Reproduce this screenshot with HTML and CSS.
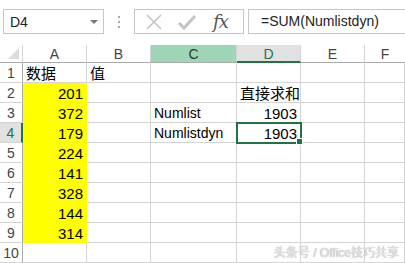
FILE: index.html
```html
<!DOCTYPE html>
<html lang="zh">
<head>
    <meta charset="UTF-8">
    <title>Numlistdyn</title>
    <link rel="stylesheet" href="styles.css">
</head>
<body>

    <div id="formula-bar">
        <div id="name-box">
            <span>D4</span>
            <span class="drop-arrow"></span>
        </div>
        <div class="grip">
            <span></span><span></span><span></span>
        </div>
        <div id="fx-box">
            <svg width="18" height="18" viewBox="0 0 18 18">
                <path d="M2 2 L16 16 M16 2 L2 16" stroke="#c4c4c4" stroke-width="1.6" fill="none"/>
            </svg>
            <svg width="20" height="18" viewBox="0 0 20 18">
                <path d="M2 10 L7 15 L18 3" stroke="#c4c4c4" stroke-width="3" fill="none"/>
            </svg>
            <span class="fx">fx</span>
        </div>
        <div id="formula-input">=SUM(Numlistdyn)</div>
    </div>

    <div id="sheet">
        <div class="corner"><span></span></div>
        <div class="col-head">A</div>
        <div class="col-head">B</div>
        <div class="col-head col-active">C</div>
        <div class="col-head col-current">D</div>
        <div class="col-head">E</div>
        <div class="col-head last">F</div>

        <div class="row-head">1</div>
        <div class="cell">数据</div>
        <div class="cell">值</div>
        <div class="cell"></div>
        <div class="cell"></div>
        <div class="cell"></div>
        <div class="cell"></div>

        <div class="row-head">2</div>
        <div class="cell yellow num">201</div>
        <div class="cell"></div>
        <div class="cell"></div>
        <div class="cell">直接求和</div>
        <div class="cell"></div>
        <div class="cell"></div>

        <div class="row-head">3</div>
        <div class="cell yellow num">372</div>
        <div class="cell"></div>
        <div class="cell label">Numlist</div>
        <div class="cell num">1903</div>
        <div class="cell"></div>
        <div class="cell"></div>

        <div class="row-head row-current">4</div>
        <div class="cell yellow num">179</div>
        <div class="cell"></div>
        <div class="cell label">Numlistdyn</div>
        <div class="cell num selected">1903</div>
        <div class="cell"></div>
        <div class="cell"></div>

        <div class="row-head">5</div>
        <div class="cell yellow num">224</div>
        <div class="cell"></div>
        <div class="cell"></div>
        <div class="cell"></div>
        <div class="cell"></div>
        <div class="cell"></div>

        <div class="row-head">6</div>
        <div class="cell yellow num">141</div>
        <div class="cell"></div>
        <div class="cell"></div>
        <div class="cell"></div>
        <div class="cell"></div>
        <div class="cell"></div>

        <div class="row-head">7</div>
        <div class="cell yellow num">328</div>
        <div class="cell"></div>
        <div class="cell"></div>
        <div class="cell"></div>
        <div class="cell"></div>
        <div class="cell"></div>

        <div class="row-head">8</div>
        <div class="cell yellow num">144</div>
        <div class="cell"></div>
        <div class="cell"></div>
        <div class="cell"></div>
        <div class="cell"></div>
        <div class="cell"></div>

        <div class="row-head">9</div>
        <div class="cell yellow num">314</div>
        <div class="cell"></div>
        <div class="cell"></div>
        <div class="cell"></div>
        <div class="cell"></div>
        <div class="cell"></div>

        <div class="row-head">10</div>
        <div class="cell"></div>
        <div class="cell"></div>
        <div class="cell"></div>
        <div class="cell"></div>
        <div class="cell"></div>
        <div class="cell"></div>
    </div>

    <div id="watermark">头条号 / Office技巧共享</div>

</body>
</html>
```

FILE: styles.css
```css
body {
    margin: 0;
    width: 405px;
    height: 263px;
    overflow: hidden;
    background-color: white;
    font-family: "Liberation Sans", "Noto Sans CJK SC", sans-serif;
    position: relative;
}
#formula-bar {
    display: flex;
    align-items: center;
    height: 25px;
    margin-top: 9px;
    margin-bottom: 11px;
}
#name-box {
    box-sizing: border-box;
    width: 101px;
    height: 25px;
    margin-left: 3px;
    border: 1px solid #c6c6c6;
    display: flex;
    align-items: center;
    justify-content: space-between;
    padding: 0 5px 0 6px;
    font-size: 14px;
    color: #222;
}
.drop-arrow {
    width: 0;
    height: 0;
    border-left: 4px solid transparent;
    border-right: 4px solid transparent;
    border-top: 4px solid #777;
}
.grip {
    width: 30px;
    display: flex;
    flex-direction: column;
    align-items: center;
    gap: 3px;
}
.grip span {
    width: 2px;
    height: 2px;
    background-color: #aaa;
}
#fx-box {
    box-sizing: border-box;
    width: 110px;
    height: 25px;
    border: 1px solid #c6c6c6;
    display: flex;
    align-items: center;
    gap: 14px;
    padding-left: 10px;
}
.fx {
    font-family: "DejaVu Serif", "Liberation Serif", serif;
    font-style: italic;
    font-size: 18px;
    letter-spacing: -1px;
    color: #555;
    margin-left: 2px;
}
#formula-input {
    box-sizing: border-box;
    flex: 1;
    height: 25px;
    margin-left: 4px;
    border: 1px solid #c6c6c6;
    border-right: none;
    padding-left: 12px;
    font-size: 14px;
    line-height: 23px;
    color: #222;
}
#sheet {
    display: grid;
    grid-template-columns: 23px 64px 64px 86px 64px 64px 40px;
    grid-template-rows: 18px repeat(10, 20px);
}
.corner {
    border-right: 1px solid #d4d4d4;
    border-bottom: 1px solid #ababab;
    position: relative;
}
.corner span {
    position: absolute;
    right: 3px;
    bottom: 3px;
    width: 0;
    height: 0;
    border-left: 11px solid transparent;
    border-bottom: 11px solid #dcdcdc;
}
.col-head {
    box-sizing: border-box;
    border-right: 1px solid #d4d4d4;
    border-bottom: 1px solid #ababab;
    text-align: center;
    font-size: 14px;
    line-height: 18px;
    color: #444;
}
.col-head.last {
    border-right: none;
}
.col-active {
    background-color: #9fd5b7;
    color: #333;
}
.col-current {
    background-color: #e1e1e1;
    border-bottom: 2px solid #217346;
    color: #217346;
}
.row-head {
    box-sizing: border-box;
    border-right: 1px solid #ababab;
    border-bottom: 1px solid #d4d4d4;
    text-align: center;
    font-size: 14px;
    line-height: 20px;
    color: #444;
}
.row-current {
    background-color: #e1e1e1;
    border-right: 2px solid #217346;
    color: #217346;
}
.cell {
    box-sizing: border-box;
    border-right: 1px solid #d4d4d4;
    border-bottom: 1px solid #d4d4d4;
    font-size: 15px;
    line-height: 21px;
    padding: 0 3px;
    white-space: nowrap;
    color: #000;
}
.label {
    font-size: 14px;
}
.num {
    text-align: right;
}
.yellow {
    background-color: #ffff00;
    border-right-color: #ffff00;
    border-bottom-color: #ffff00;
}
.selected {
    position: relative;
    outline: 2px solid #217346;
    outline-offset: -1px;
}
.selected::after {
    content: "";
    position: absolute;
    right: -3px;
    bottom: -3px;
    width: 5px;
    height: 5px;
    background-color: #217346;
    border: 1px solid white;
}
#watermark {
    position: absolute;
    right: 6px;
    bottom: 3px;
    font-size: 12px;
    color: #e4e4e4;
    text-shadow: 0 0 1px #888;
}
```
